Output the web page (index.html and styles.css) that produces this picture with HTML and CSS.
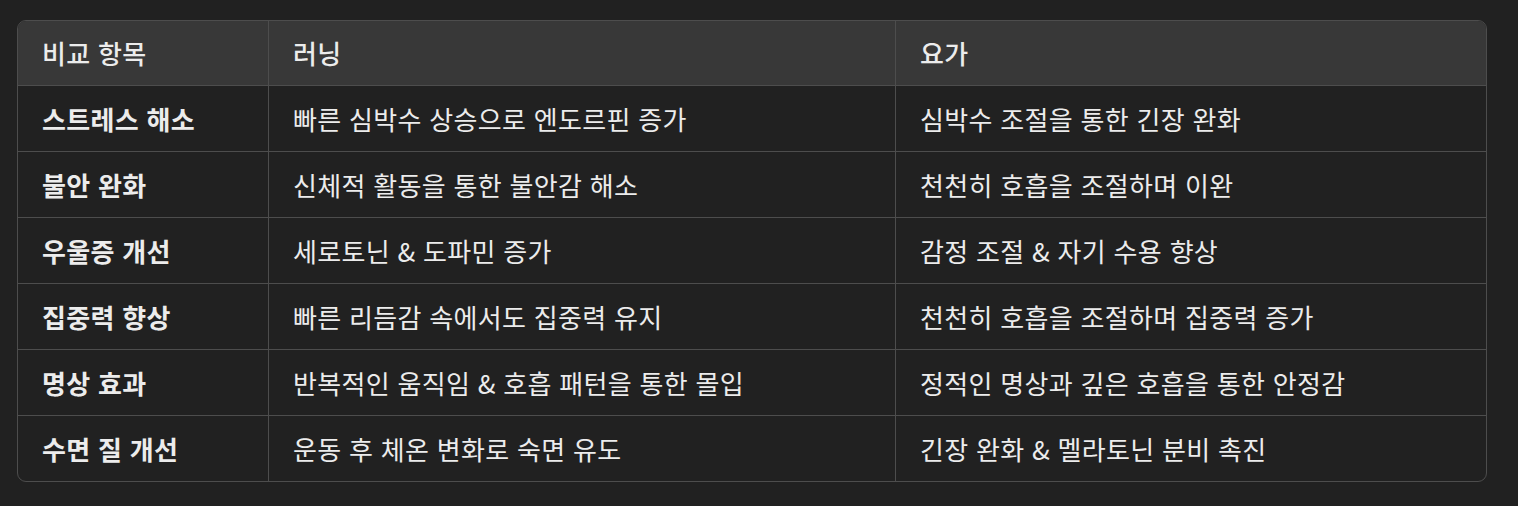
FILE: index.html
```html
<!DOCTYPE html>
<html lang="ko">
<head>
<meta charset="utf-8">
<link rel="stylesheet" href="styles.css">
</head>
<body>
<div class="wrap">
  <table class="cmp">
    <colgroup>
      <col class="c1"><col class="c2"><col class="c3">
    </colgroup>
    <thead>
      <tr><th>비교 항목</th><th>러닝</th><th>요가</th></tr>
    </thead>
    <tbody>
      <tr><td class="k">스트레스 해소</td><td>빠른 심박수 상승으로 엔도르핀 증가</td><td>심박수 조절을 통한 긴장 완화</td></tr>
      <tr><td class="k">불안 완화</td><td>신체적 활동을 통한 불안감 해소</td><td>천천히 호흡을 조절하며 이완</td></tr>
      <tr><td class="k">우울증 개선</td><td>세로토닌 &amp; 도파민 증가</td><td>감정 조절 &amp; 자기 수용 향상</td></tr>
      <tr><td class="k">집중력 향상</td><td>빠른 리듬감 속에서도 집중력 유지</td><td>천천히 호흡을 조절하며 집중력 증가</td></tr>
      <tr><td class="k">명상 효과</td><td>반복적인 움직임 &amp; 호흡 패턴을 통한 몰입</td><td>정적인 명상과 깊은 호흡을 통한 안정감</td></tr>
      <tr><td class="k">수면 질 개선</td><td>운동 후 체온 변화로 숙면 유도</td><td>긴장 완화 &amp; 멜라토닌 분비 촉진</td></tr>
    </tbody>
  </table>
</div>
</body>
</html>
```
FILE: styles.css
```css
html, body {
  margin: 0;
  padding: 0;
  background: #212121;
}
body {
  padding: 20px 0 0 17px;
  font-family: "Noto Sans CJK KR", "Noto Sans", sans-serif;
  color: #ececec;
}
.wrap {
  width: 1468px;
  border: 1px solid #4d4d4d;
  border-radius: 9px;
  overflow: hidden;
}
.cmp {
  width: 100%;
  border-collapse: separate;
  border-spacing: 0;
  table-layout: fixed;
  font-size: 26px;
  letter-spacing: 0.3px;
}
.c1 { width: 251px; }
.c2 { width: 627px; }
.c3 { width: auto; }
.cmp th, .cmp td {
  text-align: left;
  padding: 0 24px;
  border-right: 1px solid #4d4d4d;
  border-bottom: 1px solid #4d4d4d;
  white-space: nowrap;
  line-height: 1.2;
}
.cmp th:last-child, .cmp td:last-child { border-right: none; }
.cmp tbody tr:last-child td { border-bottom: none; }
.cmp thead th {
  height: 64px;
  background: #383838;
  font-weight: 500;
}
.cmp tbody td {
  height: 65px;
  font-weight: 400;
}
.cmp td.k { font-weight: 700; }
```
